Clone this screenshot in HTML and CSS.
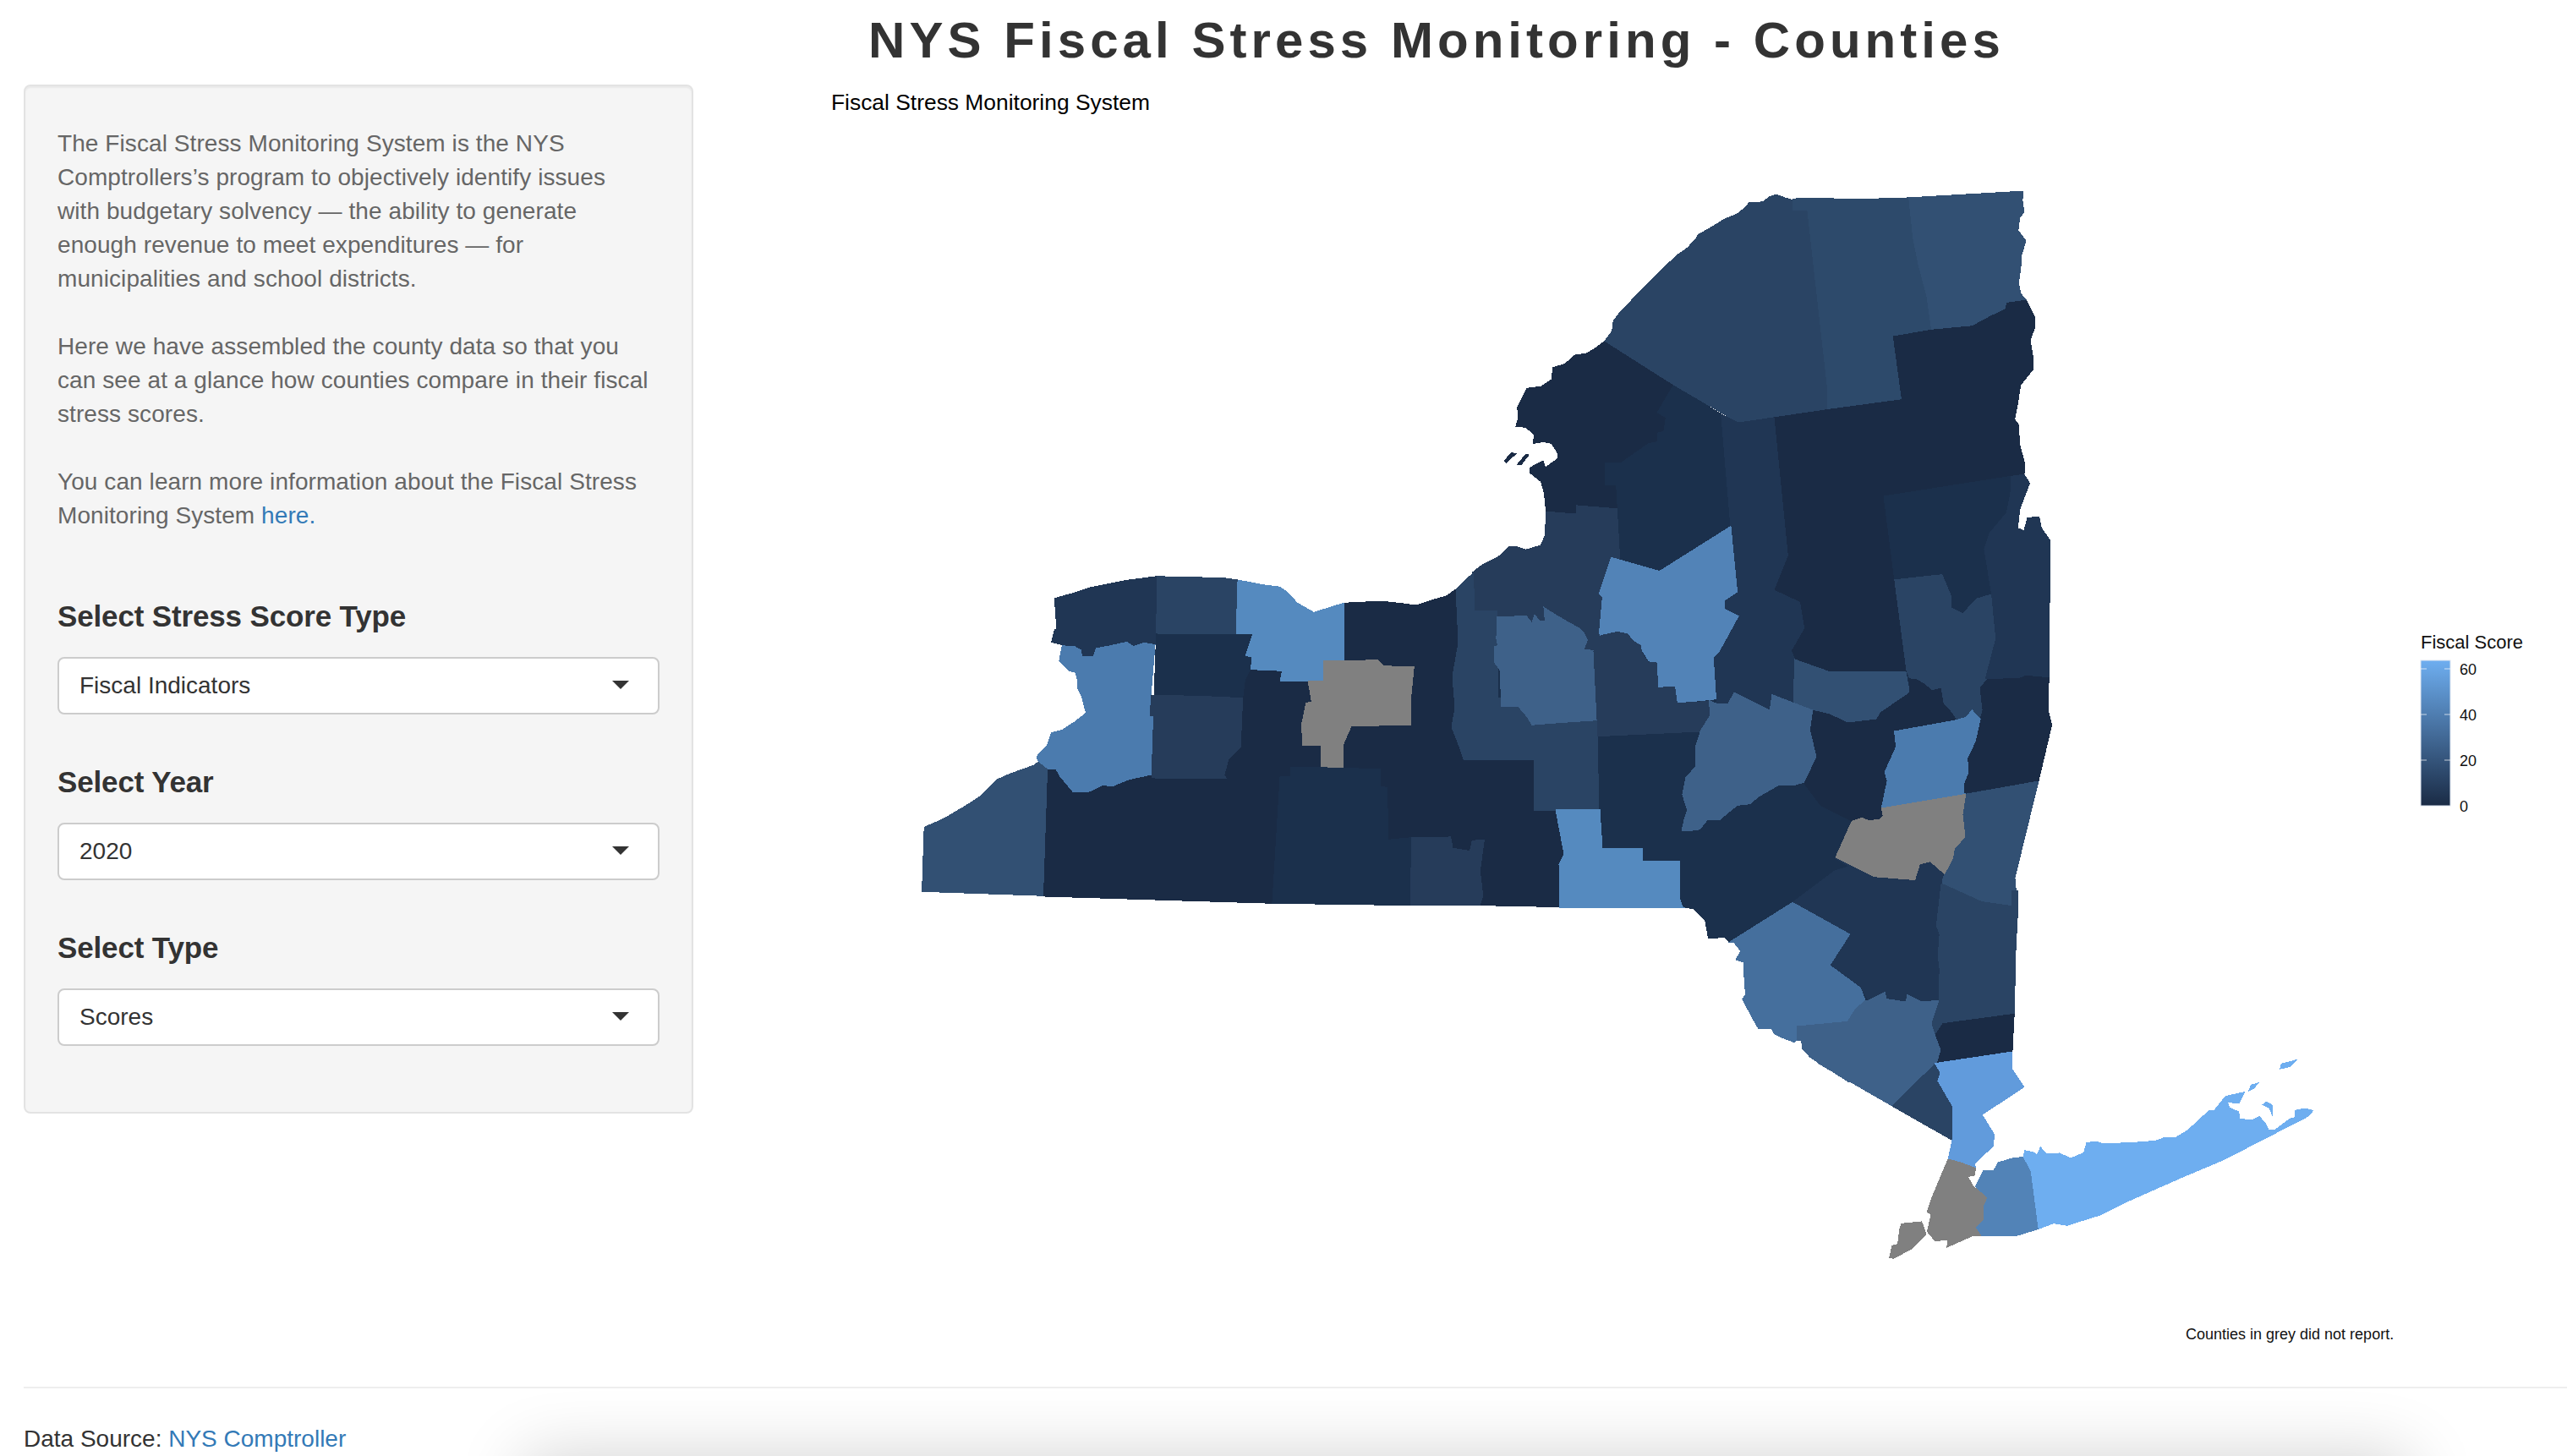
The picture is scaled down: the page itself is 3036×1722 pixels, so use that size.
FILE: index.html
```html
<!DOCTYPE html>
<html lang="en">
<head>
    <meta charset="UTF-8">
    <title>NYS Fiscal Stress Monitoring - Counties</title>
    <link rel="stylesheet" href="styles.css">
</head>
<body>
    <h2 class="page-title">NYS Fiscal Stress Monitoring - Counties</h2>

    <div class="layout">
        <div class="well">
            <p class="intro">The Fiscal Stress Monitoring System is the NYS<br>Comptrollers’s program to objectively identify issues<br>with budgetary solvency — the ability to generate<br>enough revenue to meet expenditures — for<br>municipalities and school districts.</p>
            <p class="intro">Here we have assembled the county data so that you<br>can see at a glance how counties compare in their fiscal<br>stress scores.</p>
            <p class="intro last">You can learn more information about the Fiscal Stress<br>Monitoring System <a href="#">here.</a></p>

            <div class="form-group">
                <label class="control-label">Select Stress Score Type</label>
                <div class="select-box">Fiscal Indicators</div>
            </div>
            <div class="form-group">
                <label class="control-label">Select Year</label>
                <div class="select-box">2020</div>
            </div>
            <div class="form-group">
                <label class="control-label">Select Type</label>
                <div class="select-box">Scores</div>
            </div>
        </div>

        <div class="main">
            <svg class="plot" width="2156" height="1540" viewBox="880 100 2156 1540">
                <defs>
                    <linearGradient id="scoreScale" x1="0" y1="0" x2="0" y2="1">
                        <stop offset="0" stop-color="#6eaef0"/>
                        <stop offset="1" stop-color="#1a2b45"/>
                    </linearGradient>
                </defs>

                <text class="plot-title" x="983" y="130">Fiscal Stress Monitoring System</text>

                <!-- backing shape so seams between traced counties stay dark -->
                <polygon class="c1" points="1750,760 1900,740 2000,500 2300,500 2380,780 2380,1000 2340,1180 2200,1200 2050,1070 1300,1060 1300,900 1700,900"/>

                <!-- western counties -->
                <g transform="translate(1060 660) scale(.5102 .3333)">
                    <polygon class="c6" points="65,955 110,925 160,880 195,845 235,785 265,765 320,735 330,722 352,748 342,1198 60,1183"/>
                    <polygon class="c0" points="1037,160 1100,155 1135,155 1165,160 1205,168 1240,150 1275,135 1298,110 1303,300 1290,420 1295,530 1288,600 1305,670 1315,715 1478,715 1480,895 1485,985 1440,975 1415,1015 1390,1015 1365,1000 1335,1003 1330,1040 1290,1030 1285,990 1195,992 1140,1000 1138,815 1122,810 1122,750 1035,745 1035,665 1055,595 1193,593 1192,510 1200,387 1130,383 1115,360 1070,365 1037,363"/>
                    <polygon class="c0" points="352,748 370,748 380,775 410,830 445,830 480,805 500,810 540,785 590,768 592,780 765,782 760,770 770,715 795,670 803,500 808,435 820,395 895,400 895,435 955,438 963,510 950,515 940,590 942,665 985,665 985,745 915,742 915,775 890,775 872,1225 342,1200"/>
                    <polygon class="m3" points="385,308 415,312 430,325 432,348 455,348 462,318 490,310 535,295 550,310 575,298 600,305 590,490 590,560 597,560 592,768 540,785 500,810 480,805 445,830 410,830 380,775 370,748 352,748 330,722 325,705 350,665 360,620 385,610 415,580 440,550 430,490 420,460 420,430 415,405 400,400 378,365"/>
                    <polygon class="c2" points="367,143 405,127 450,105 530,80 605,65 603,270 600,305 575,298 550,310 535,295 490,310 462,318 455,348 432,348 430,325 415,312 385,308 360,298 367,255 372,250"/>
                    <polygon class="c4" points="605,65 660,68 755,70 792,78 788,272 603,270"/>
                    <polygon class="l2" points="792,78 850,95 890,103 905,120 930,160 968,193 1037,160 1037,363 990,365 990,437 890,437 895,400 822,395 823,352 807,350 824,273 788,272"/>
                    <polygon class="c1" points="603,270 824,273 807,350 823,352 820,395 808,435 803,497 700,490 590,487 598,487"/>
                    <polygon class="c3" points="592,487 700,490 803,497 798,670 770,715 760,770 765,782 592,780 597,560 588,558"/>
                    <polygon class="grey" points="990,365 1070,365 1115,360 1130,383 1200,387 1192,510 1193,593 1055,595 1035,665 1035,745 985,745 985,665 942,665 940,590 950,515 963,510 955,438 990,437"/>
                    <polygon class="c1" points="915,742 1035,745 1122,750 1122,810 1138,815 1140,1000 1195,992 1192,1232 872,1225 890,775 915,775"/>
                    <polygon class="c3" points="1195,992 1285,990 1290,1030 1330,1040 1335,1003 1365,1000 1355,1110 1362,1200 1355,1232 1192,1232"/>
                    <polygon class="c0" points="1365,1000 1390,1015 1415,1015 1440,975 1485,985 1480,895 1530,893 1550,1050 1537,1085 1540,1238 1355,1232 1362,1200 1355,1110"/>
                </g>

                <!-- finger lakes strip, traced straight on the page grid -->
                <polygon class="c4" points="1722,697 1745,675 1771,700 1771,825 1880,825 1889,852 1894,940 1892,958 1815,958 1814,898 1731,898 1726,883 1717,860 1721,837 1718,800 1725,760"/>
                <polygon class="c1" points="1890,871 2012,865 2005,885 2006,898 2003,903 2005,915 1990,930 1990,940 1996,958 1992,970 1989,984 1989,1018 1942,1018 1942,1003 1895,1003 1892,958"/>
                <polygon class="l2" points="1840,958 1892,957 1895,1003 1942,1003 1942,1018 1987,1018 1987,1062 1992,1073 1845,1073 1844,1022 1850,1010"/>

                <!-- north country -->
                <g transform="translate(1700 200) scale(.5102 .4082)">
                    <polygon class="c3" points="252,990 320,997 320,972 418,982 425,1135 403,1125 375,1230 383,1240 375,1350 365,1395 340,1390 350,1360 335,1340 138,1340 140,1278 88,1278 85,1168 80,1170 100,1150 125,1133 140,1125 165,1095 185,1095 205,1103 240,1090 250,1060"/>
                    <polygon class="c0" points="388,498 548,625 510,705 530,720 525,760 510,765 510,790 490,795 425,852 390,852 390,915 415,915 418,982 320,972 320,997 252,990 248,940 240,905 215,880 215,865 245,845 250,865 278,840 280,825 265,795 245,790 222,795 225,770 205,748 182,745 187,725 186,690 208,635 240,630 265,610 268,575 295,565 320,538 345,535 365,520"/>
                    <polygon class="c0" points="155,845 172,822 182,825 160,850"/>
                    <polygon class="c0" points="186,855 205,826 212,828 195,855"/>
                    <polygon class="c1" points="548,625 658,710 680,1035 515,1165 425,1135 418,980 415,915 390,915 390,852 425,852 490,795 510,790 510,765 525,760 530,720 510,705"/>
                    <polygon class="c4" points="388,498 405,470 408,440 420,420 450,380 490,330 525,285 555,250 580,228 600,200 605,190 640,165 665,145 695,130 715,110 722,98 755,95 770,80 785,74 810,85 825,90 825,118 858,118 880,350 905,640 905,697 780,720 698,735 548,625"/>
                    <polygon class="c5" points="825,86 885,84 965,88 1095,83 1103,200 1115,275 1135,370 1146,466 1057,485 1077,668 905,697 905,640 858,118 825,118"/>
                    <polygon class="c6" points="1093,83 1358,64 1356,90 1360,125 1350,140 1346,178 1364,207 1354,250 1352,290 1347,330 1352,360 1365,380 1320,388 1318,405 1280,428 1277,440 1240,455 1146,466 1135,370 1115,275 1103,200"/>
                    <polygon class="c0" points="1365,380 1385,430 1385,460 1374,495 1380,540 1381,580 1352,625 1345,680 1338,725 1347,740 1350,800 1362,855 1360,885 1035,948 1060,1190 1088,1455 910,1460 822,1420 818,1395 848,1330 840,1255 780,1220 812,1120 780,720 905,697 1077,668 1057,485 1146,466 1240,455 1280,428 1318,405 1320,388"/>
                    <polygon class="c2" points="658,710 698,735 780,720 812,1120 780,1220 840,1255 850,1330 820,1395 830,1425 825,1540 775,1522 760,1568 690,1518 660,1550 648,1535 640,1415 652,1400 698,1295 665,1275 665,1250 695,1225 680,1035"/>
                    <polygon class="l1" points="403,1125 515,1165 680,1035 695,1225 665,1250 665,1275 698,1295 652,1400 640,1415 648,1535 555,1547 550,1497 512,1502 505,1430 490,1425 470,1385 440,1345 405,1345 380,1352 375,1350 383,1240 375,1230"/>
                    <polygon class="c1" points="1035,948 1330,890 1330,930 1320,995 1280,1055 1268,1100 1285,1232 1250,1245 1218,1288 1190,1270 1190,1235 1170,1175 1060,1190"/>
                    <polygon class="c4" points="1060,1190 1170,1175 1190,1235 1190,1270 1218,1288 1250,1245 1285,1232 1295,1360 1285,1440 1265,1480 1255,1500 1265,1568 1185,1568 1165,1510 1130,1500 1095,1475 1088,1455"/>
                    <polygon class="c2" points="1330,890 1360,885 1373,910 1350,985 1345,1040 1360,1048 1368,1010 1395,1008 1400,1040 1420,1075 1418,1475 1350,1470 1270,1480 1295,1360 1285,1232 1268,1100 1280,1055 1320,995 1330,930"/>
                </g>

                <!-- central counties, traced at 3x -->
                <g transform="translate(1740 640) scale(.3333)">
                    <polygon class="c3" points="250,230 440,300 455,335 440,395 380,390 300,300"/>
                    <polygon class="m1" points="93,270 195,265 215,290 225,262 245,285 262,282 258,235 300,262 340,285 385,310 400,325 412,350 400,385 435,388 447,635 300,645 215,652 200,625 168,588 108,588 102,457 82,430 82,375 95,370 88,340 93,335"/>
                    <polygon class="c3" points="435,390 460,335 520,322 555,330 575,355 600,370 605,395 628,430 657,430 663,520 722,517 730,575 848,568 845,620 815,675 450,692"/>
                </g>

                <!-- hudson valley -->
                <g transform="translate(1900 780) scale(.3827 .3333)">
                    <polygon class="c2" points="333,0 585,0 578,150 512,125 505,180 395,118 375,158 342,158"/>
                    <polygon class="c6" points="582,0 692,45 925,45 937,118 848,188 835,213 745,225 690,195 637,180 578,150"/>
                    <polygon class="c4" points="935,68 960,72 985,90 1005,110 1033,103 1040,155 1060,180 1082,215 1110,205 1130,180 1155,212 1163,180 1155,100 1178,70 1100,60 1000,60"/>
                    <polygon class="c2" points="1195,0 1367,0 1367,65 1295,58 1275,68 1178,70"/>
                    <polygon class="c0" points="1178,70 1275,68 1295,58 1367,65 1365,180 1376,232 1335,432 1105,473 1103,445 1118,400 1115,350 1140,290 1155,212 1163,180 1155,100"/>
                    <polygon class="c0" points="635,180 690,195 745,225 835,213 848,188 937,118 935,68 960,72 985,90 1005,110 1033,103 1040,155 1060,180 1082,215 890,255 895,310 860,400 868,430 848,528 855,555 845,568 810,572 790,562 755,575 660,520 608,440 648,345 628,250"/>
                    <polygon class="m3" points="890,255 1082,215 1110,205 1130,180 1155,212 1140,290 1115,350 1118,400 1103,445 1105,473 1110,478 850,528 868,430 860,400 895,310"/>
                    <polygon class="c6" points="1110,478 1335,432 1262,775 1265,815 1272,875 1252,875 1160,860 1035,795 1045,760 1070,705 1075,670 1108,630 1100,550"/>
                    <polygon class="grey" points="850,528 1110,478 1100,550 1108,630 1075,670 1070,705 1045,760 1000,720 970,728 955,785 825,773 705,703 755,575 790,562 810,572 845,568 855,555"/>
                    <polygon class="m1" points="395,118 505,180 512,125 637,180 628,250 648,345 608,440 575,450 535,447 470,490 460,505 445,515 405,520 350,572 313,572 290,605 250,612 232,612 240,570 250,535 235,480 245,420 275,380 275,310 292,250 320,200 318,145 342,158 375,158"/>
                    <polygon class="c1" points="232,612 250,612 290,605 313,572 350,572 405,520 445,515 470,490 535,447 575,450 608,440 660,520 755,575 705,703 750,735 705,750 575,860 380,1003 365,985 315,990 305,925 270,885 238,878 228,845 228,713"/>
                    <polygon class="c2" points="705,703 825,773 955,785 970,728 1000,720 1040,760 1035,795 1020,945 1030,975 1025,1050 1030,1100 1027,1210 975,1215 930,1190 925,1215 865,1205 860,1180 810,1210 785,1165 690,1085 752,975 575,862 705,750 750,735"/>
                    <polygon class="m2" points="575,862 752,975 690,1085 785,1165 800,1210 770,1240 745,1285 590,1302 590,1350 580,1358 550,1345 520,1330 510,1310 470,1310 450,1270 420,1205 430,1190 425,1115 425,1075 400,1065 415,1035 395,1005 380,1003"/>
                    <polygon class="c4" points="1035,795 1160,860 1252,875 1252,820 1272,820 1272,875 1265,1020 1260,1258 1040,1292 1015,1335 1003,1290 1027,1210 1030,1100 1025,1050 1030,975 1020,945"/>
                    <polygon class="c0" points="1040,1292 1260,1258 1254,1392 1040,1432 1020,1432 1032,1385 1015,1335"/>
                    <polygon class="m1" points="590,1302 745,1285 770,1240 800,1210 810,1210 860,1180 865,1205 925,1215 930,1190 975,1215 1027,1210 1003,1290 1015,1335 1032,1385 1020,1432 958,1500 750,1500 630,1412 605,1380 603,1352 590,1350"/>
                </g>

                <!-- lower hudson, city and long island -->
                <g transform="translate(2150 1200) scale(.4464 .3333)">
                    <polygon class="m1" points="0,172 198,325 310,175 200,100 0,100"/>
                    <polygon class="c4" points="310,175 325,205 318,235 357,325 355,445 198,325"/>
                    <polygon class="l3" points="310,173 515,132 513,190 546,257 435,355 467,425 465,465 415,530 418,545 345,515 357,440 357,325 318,235 325,205"/>
                    <polygon class="grey" points="345,513 378,525 418,545 415,570 397,575 412,610 450,650 440,680 440,730 420,755 435,785 410,785 342,825 345,800 310,802 290,770 300,710 290,700 302,650"/>
                    <polygon class="grey" points="222,742 275,735 287,780 250,830 200,865 190,862 197,820 212,815 217,760"/>
                    <polygon class="l1" points="418,610 438,555 465,555 478,525 515,510 545,505 565,555 585,760 525,785 435,785 420,755 440,730 440,680 450,650"/>
                    <polygon class="l4" points="548,482 575,490 580,500 590,470 605,495 640,492 670,510 705,490 712,455 735,450 755,458 830,455 895,448 915,438 950,435 980,410 1005,380 1035,342 1050,340 1080,290 1130,275 1115,315 1085,310 1090,330 1115,345 1118,370 1150,375 1170,362 1185,385 1195,410 1210,410 1250,370 1265,365 1265,340 1290,333 1312,340 1300,360 1075,515 960,580 825,660 750,710 660,748 625,740 585,760 565,555 545,505"/>
                    <polygon class="l4" points="1225,192 1228,175 1270,160 1250,185"/>
                    <polygon class="l4" points="1142,270 1148,250 1166,243 1155,262"/>
                    <polygon class="l4" points="1178,320 1188,310 1205,322 1205,358 1195,330"/>
                </g>

                <!-- colorbar -->
                <text class="legend-title" x="2863" y="767">Fiscal Score</text>
                <rect class="legend-bar" x="2863" y="781" width="35" height="172" fill="url(#scoreScale)"/>
                <path class="legend-tick" d="M2863 791h7M2891 791h7M2863 845h7M2891 845h7M2863 899h7M2891 899h7"/>
                <text class="legend-label" x="2909" y="798">60</text>
                <text class="legend-label" x="2909" y="852">40</text>
                <text class="legend-label" x="2909" y="906">20</text>
                <text class="legend-label" x="2909" y="960">0</text>

                <text class="plot-note" x="2585" y="1584">Counties in grey did not report.</text>
            </svg>
        </div>
    </div>

    <hr class="rule">
    <div class="source">Data Source: <a href="#">NYS Comptroller</a></div>

    <div class="edge-clip"><div class="edge-shadow"></div></div>
</body>
</html>
```
FILE: styles.css
```css
html, body {
    margin: 0;
    height: 1722px;
    overflow: hidden;
    background: #fff;
}
body {
    position: relative;
    font-family: "Liberation Sans", Arial, sans-serif;
    font-size: 28px;
    line-height: 40px;
    color: #333;
}
a {
    color: #337ab7;
    text-decoration: none;
}
.page-title {
    margin: 0;
    height: 100px;
    padding: 15px 0 0 362px;
    box-sizing: border-box;
    font-size: 60px;
    line-height: 66px;
    font-weight: 700;
    letter-spacing: 5.05px;
    text-align: center;
    color: #333;
}
.layout {
    display: flex;
    height: 1540px;
    padding-left: 28px;
}
.well {
    width: 792px;
    height: 1217px;
    box-sizing: border-box;
    padding: 48px 38px 0;
    background: #f5f5f5;
    border: 2px solid #e3e3e3;
    border-radius: 8px;
    box-shadow: inset 0 2px 2px rgba(0, 0, 0, .05);
}
.intro {
    margin: 0 0 40px;
    color: #666;
    letter-spacing: .08px;
}
.intro.last {
    margin-bottom: 79px;
}
.form-group {
    margin-bottom: 60px;
}
.control-label {
    display: block;
    margin-bottom: 28px;
    font-size: 35px;
    font-weight: 700;
    letter-spacing: -.15px;
}
.select-box {
    position: relative;
    height: 68px;
    box-sizing: border-box;
    padding: 12px 24px;
    background: #fff;
    border: 2px solid #ccc;
    border-radius: 8px;
    color: #333;
}
.select-box::after {
    content: "";
    position: absolute;
    right: 34px;
    top: 26px;
    border-top: 10px solid #333;
    border-left: 10px solid transparent;
    border-right: 10px solid transparent;
}
.main {
    margin-left: 60px;
    flex: 1;
}
.plot {
    display: block;
}
.plot polygon {
    stroke-width: 1;
    vector-effect: non-scaling-stroke;
    shape-rendering: crispEdges;
}
.plot-title {
    font-size: 26.4px;
    fill: #000;
}
.legend-title {
    font-size: 22px;
    fill: #111;
}
.legend-label {
    font-size: 18px;
    fill: #111;
}
.plot-note {
    font-size: 18px;
    fill: #111;
}
.legend-bar {
    stroke: #dde6f2;
    stroke-width: 1;
}
.legend-tick {
    stroke: #fff;
    stroke-width: 1;
    opacity: .7;
}

/* fill steps of the score scale */
.c0 { fill: #1a2b45; stroke: #1a2b45; }
.c1 { fill: #1b304c; stroke: #1b304c; }
.c2 { fill: #203654; stroke: #203654; }
.c3 { fill: #263c5a; stroke: #263c5a; }
.c4 { fill: #2a4464; stroke: #2a4464; }
.c5 { fill: #2d4a6b; stroke: #2d4a6b; }
.c6 { fill: #325073; stroke: #325073; }
.m1 { fill: #3e6189; stroke: #3e6189; }
.m2 { fill: #456f9d; stroke: #456f9d; }
.m3 { fill: #4b7bae; stroke: #4b7bae; }
.l1 { fill: #5283b7; stroke: #5283b7; }
.l2 { fill: #558abf; stroke: #558abf; }
.l3 { fill: #619bdc; stroke: #619bdc; }
.l4 { fill: #6eaef0; stroke: #6eaef0; }
.grey { fill: #808080; stroke: #808080; }

.rule {
    margin: 0 0 40px 28px;
    height: 2px;
    border: 0;
    background: #eee;
}
.source {
    padding-left: 28px;
}
/* soft shadow rising from under the bottom edge of the window */
.edge-clip {
    position: absolute;
    left: 0;
    right: 0;
    top: 1642px;
    height: 80px;
    overflow: hidden;
    pointer-events: none;
}
.edge-shadow {
    position: absolute;
    left: 620px;
    top: 80px;
    width: 2230px;
    height: 100px;
    box-shadow: 0 0 80px rgba(0, 0, 0, .18);
}
```
